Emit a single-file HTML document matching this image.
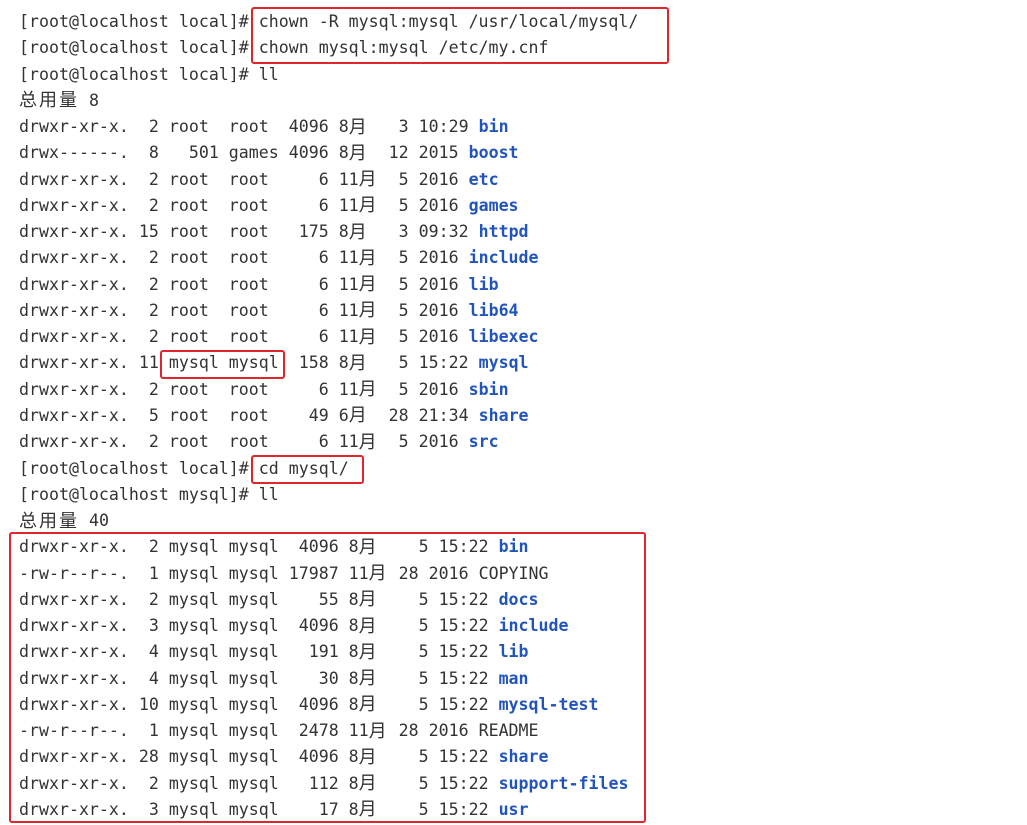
<!DOCTYPE html>
<html><head><meta charset="utf-8"><style>
html,body{margin:0;padding:0;background:#fff;width:1027px;height:825px;overflow:hidden;position:relative}
.t{position:absolute;left:19px;top:9px;margin:0;font-family:"DejaVu Sans Mono","Liberation Mono",monospace;font-size:16.6px;color:#333}
.t div{height:26.27px;line-height:26.27px;white-space:pre;overflow:visible}
.c{display:inline-block;width:20px;height:26.27px;line-height:26.27px;vertical-align:top;position:relative;top:-1.5px;font-size:18px;font-family:"Noto Sans CJK SC",sans-serif;text-align:left}
b{color:#2255bb}
.r{position:absolute;border:2.5px solid #e0262b;border-radius:3px;box-sizing:border-box}
</style></head><body>
<div class="t">
<div>[root@localhost local]# chown -R mysql:mysql /usr/local/mysql/</div>
<div>[root@localhost local]# chown mysql:mysql /etc/my.cnf</div>
<div>[root@localhost local]# ll</div>
<div><span class="c">总</span><span class="c">用</span><span class="c">量</span> 8</div>
<div>drwxr-xr-x.  2 root  root  4096 8<span class="c">月</span>   3 10:29 <b>bin</b></div>
<div>drwx------.  8   501 games 4096 8<span class="c">月</span>  12 2015 <b>boost</b></div>
<div>drwxr-xr-x.  2 root  root     6 11<span class="c">月</span>  5 2016 <b>etc</b></div>
<div>drwxr-xr-x.  2 root  root     6 11<span class="c">月</span>  5 2016 <b>games</b></div>
<div>drwxr-xr-x. 15 root  root   175 8<span class="c">月</span>   3 09:32 <b>httpd</b></div>
<div>drwxr-xr-x.  2 root  root     6 11<span class="c">月</span>  5 2016 <b>include</b></div>
<div>drwxr-xr-x.  2 root  root     6 11<span class="c">月</span>  5 2016 <b>lib</b></div>
<div>drwxr-xr-x.  2 root  root     6 11<span class="c">月</span>  5 2016 <b>lib64</b></div>
<div>drwxr-xr-x.  2 root  root     6 11<span class="c">月</span>  5 2016 <b>libexec</b></div>
<div>drwxr-xr-x. 11 mysql mysql  158 8<span class="c">月</span>   5 15:22 <b>mysql</b></div>
<div>drwxr-xr-x.  2 root  root     6 11<span class="c">月</span>  5 2016 <b>sbin</b></div>
<div>drwxr-xr-x.  5 root  root    49 6<span class="c">月</span>  28 21:34 <b>share</b></div>
<div>drwxr-xr-x.  2 root  root     6 11<span class="c">月</span>  5 2016 <b>src</b></div>
<div>[root@localhost local]# cd mysql/</div>
<div>[root@localhost mysql]# ll</div>
<div><span class="c">总</span><span class="c">用</span><span class="c">量</span> 40</div>
<div>drwxr-xr-x.  2 mysql mysql  4096 8<span class="c">月</span>    5 15:22 <b>bin</b></div>
<div>-rw-r--r--.  1 mysql mysql 17987 11<span class="c">月</span> 28 2016 COPYING</div>
<div>drwxr-xr-x.  2 mysql mysql    55 8<span class="c">月</span>    5 15:22 <b>docs</b></div>
<div>drwxr-xr-x.  3 mysql mysql  4096 8<span class="c">月</span>    5 15:22 <b>include</b></div>
<div>drwxr-xr-x.  4 mysql mysql   191 8<span class="c">月</span>    5 15:22 <b>lib</b></div>
<div>drwxr-xr-x.  4 mysql mysql    30 8<span class="c">月</span>    5 15:22 <b>man</b></div>
<div>drwxr-xr-x. 10 mysql mysql  4096 8<span class="c">月</span>    5 15:22 <b>mysql-test</b></div>
<div>-rw-r--r--.  1 mysql mysql  2478 11<span class="c">月</span> 28 2016 README</div>
<div>drwxr-xr-x. 28 mysql mysql  4096 8<span class="c">月</span>    5 15:22 <b>share</b></div>
<div>drwxr-xr-x.  2 mysql mysql   112 8<span class="c">月</span>    5 15:22 <b>support-files</b></div>
<div>drwxr-xr-x.  3 mysql mysql    17 8<span class="c">月</span>    5 15:22 <b>usr</b></div>
</div>
<div class="r" style="left:251px;top:7px;width:418px;height:57px"></div>
<div class="r" style="left:160px;top:350px;width:125px;height:29px"></div>
<div class="r" style="left:251px;top:455px;width:113px;height:29px"></div>
<div class="r" style="left:9px;top:532px;width:637px;height:291px"></div>
</body></html>
